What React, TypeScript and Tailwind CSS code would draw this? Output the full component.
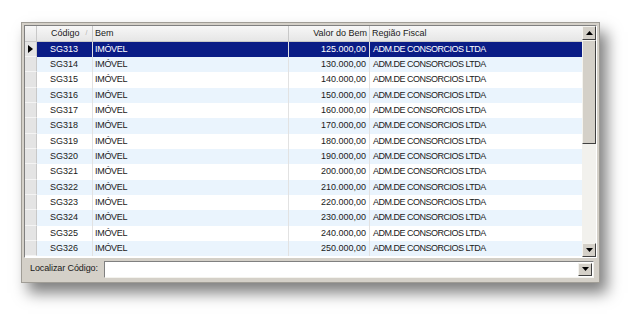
import React from "react";

const rows = Array.from({ length: 14 }, (_, i) => ({
  code: `SG${313 + i}`,
  bem: "IMÓVEL",
  valor: `${i === 0 ? 125 : 120 + i * 10}.000,00`,
  regiao: "ADM.DE CONSORCIOS LTDA",
}));

function UpArrow() {
  return (
    <svg width="7" height="4" viewBox="0 0 7 4">
      <path d="M3.5 0 L7 4 L0 4 Z" fill="#000" />
    </svg>
  );
}
function DownArrow() {
  return (
    <svg width="7" height="4" viewBox="0 0 7 4">
      <path d="M0 0 L7 0 L3.5 4 Z" fill="#000" />
    </svg>
  );
}

function Btn({ children, h }: { children: React.ReactNode; h: string }) {
  return (
    <div
      className={`w-[14px] ${h} bg-[#d4d0c8] border-t border-l border-t-[#f4f3ee] border-l-[#f4f3ee] border-b border-r border-b-[#404040] border-r-[#404040] flex items-center justify-center`}
    >
      {children}
    </div>
  );
}

export default function App() {
  return (
    <div
      className="w-[642px] h-[325px] bg-white overflow-hidden pt-[22px] pl-[21px]"
      style={{ fontFamily: '"Liberation Sans", Arial, sans-serif' }}
    >
      <div className="w-[579px] h-[261px] bg-[#d4d0c8] border border-[#a09d96] shadow-[7px_10px_14px_rgba(0,0,0,0.5)] flex flex-col p-[2px] pt-[2px]">
        {/* grid */}
        <div className="h-[233px] flex border-t border-l border-[#808080] border-b border-r border-b-white border-r-white">
          <div className="flex-1 flex flex-col bg-white overflow-hidden">
            {/* header */}
            <div className="h-[16px] flex text-[9px] text-[#1a1a1a] bg-gradient-to-b from-[#f7f7f7] to-[#e6e6e6] border-b border-[#c8c8c8]">
              <div className="w-[12px] border-r border-[#c8c8c8]" />
              <div className="w-[56px] border-r border-[#c8c8c8] flex items-center pl-[14px] gap-[6px]">
                <span>Código</span>
                <span className="text-[#b0b0b0] text-[7px]">/</span>
              </div>
              <div className="w-[196px] border-r border-[#c8c8c8] flex items-center pl-[2px]">Bem</div>
              <div className="w-[81px] border-r border-[#c8c8c8] flex items-center justify-end pr-[2px]">
                Valor do Bem
              </div>
              <div className="flex-1 flex items-center pl-[2px]">Região Fiscal</div>
            </div>
            {rows.map((r, i) => {
              const sel = i === 0;
              const bg = sel ? "bg-[#0a1c86] text-white" : i % 2 === 0 ? "bg-white text-[#1a1a1a]" : "bg-[#eaf4fd] text-[#1a1a1a]";
              const h = i % 3 === 2 ? "h-[16px]" : "h-[15px]";
              return (
                <div key={r.code} className={`flex text-[9px] ${h}`}>
                  <div className="w-[12px] bg-[#e4e4e4] border-r border-[#c8c8c8] border-b border-b-[#f4f4f4] flex items-center justify-center">
                    {sel && (
                      <svg width="5" height="8" viewBox="0 0 5 8">
                        <path d="M0 0 L5 4 L0 8 Z" fill="#000" />
                      </svg>
                    )}
                  </div>
                  <div className={`flex-1 flex ${bg}`}>
                    <div className="w-[56px] flex items-center pl-[13px] border-r border-[#e2e2e2]">{r.code}</div>
                    <div className="w-[196px] flex items-center pl-[2px] border-r border-[#e2e2e2] tracking-[-0.3px]">{r.bem}</div>
                    <div className="w-[81px] flex items-center justify-end pr-[3px] border-r border-[#e2e2e2]">
                      {r.valor}
                    </div>
                    <div className="flex-1 flex items-center pl-[3px] tracking-[-0.5px]">{r.regiao}</div>
                  </div>
                </div>
              );
            })}
          </div>
          {/* scrollbar */}
          <div className="w-[14px] flex flex-col bg-[#ebe9e4]">
            <Btn h="h-[14px]">
              <UpArrow />
            </Btn>
            <div className="flex-1 flex flex-col">
              <div className="h-[104px] bg-[#d4d0c8] border-t border-l border-t-[#f4f3ee] border-l-[#f4f3ee] border-b border-r border-b-[#404040] border-r-[#404040]" />
              <div className="flex-1 bg-[#f2f1ed]" />
            </div>
            <Btn h="h-[14px]">
              <DownArrow />
            </Btn>
          </div>
        </div>
        {/* bottom */}
        <div className="flex-1 flex items-center gap-[6px] pl-[6px] pr-[3px] text-[9px] text-[#1a1a1a]">
          <span className="whitespace-nowrap tracking-[-0.1px]">Localizar Código:</span>
          <div className="flex-1 h-[17px] bg-white border-t border-l border-[#808080] border-b border-r border-b-[#f4f3ee] border-r-[#f4f3ee] flex justify-end items-center pr-[1px]">
            <Btn h="h-[13px]">
              <DownArrow />
            </Btn>
          </div>
        </div>
      </div>
    </div>
  );
}
